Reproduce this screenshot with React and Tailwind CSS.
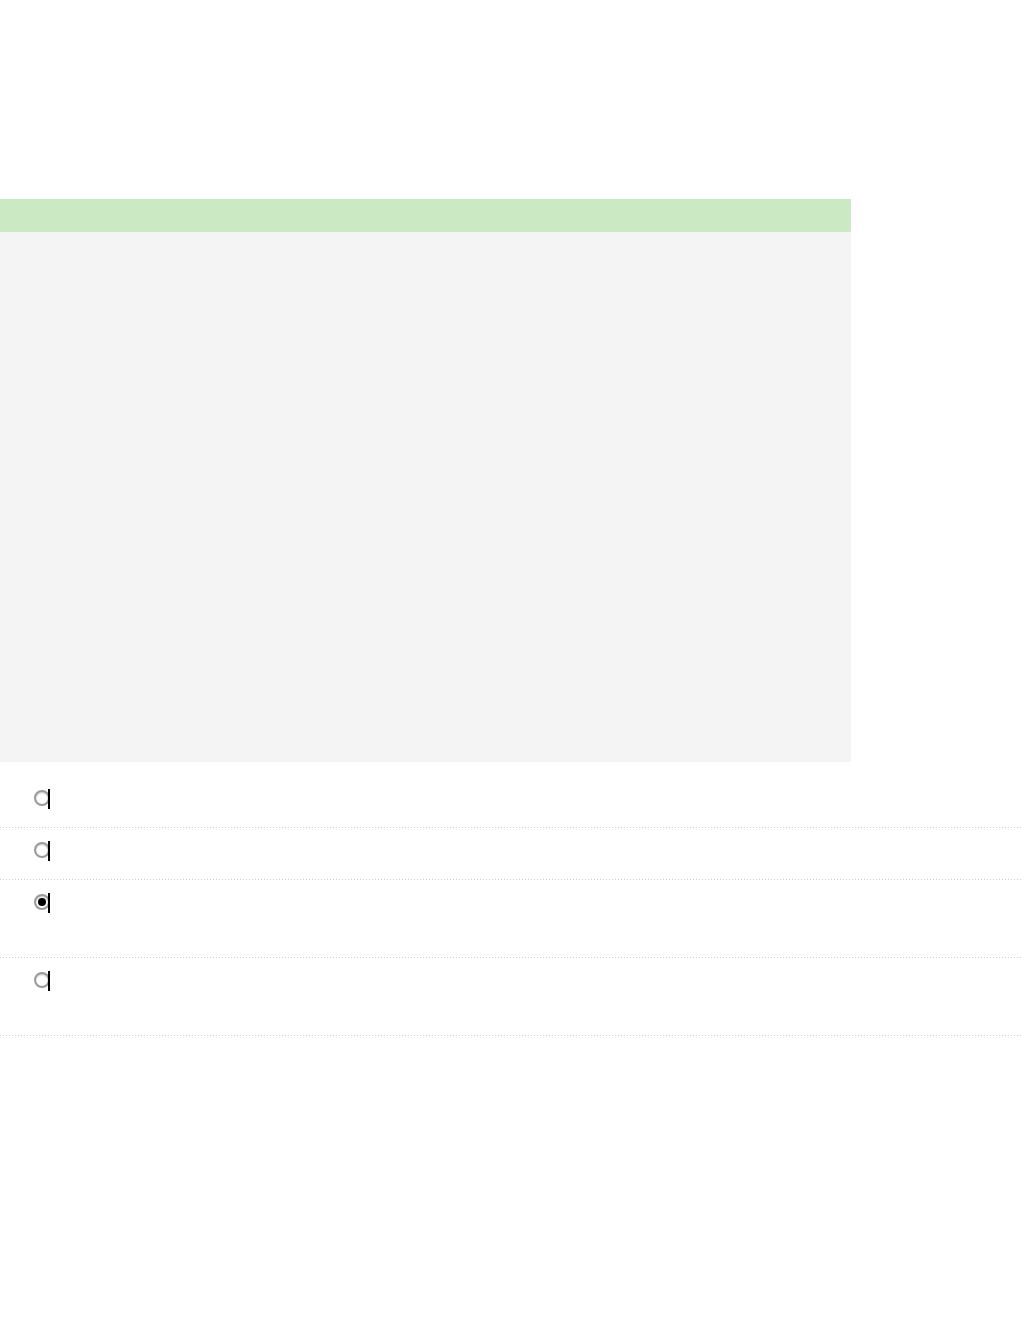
const options = [
  { id: 'a', checked: false, tall: false },
  { id: 'b', checked: false, tall: false },
  { id: 'c', checked: true, tall: true },
  { id: 'd', checked: false, tall: true },
]

const Radio = ({ checked }) => (
  <div className="relative h-4 w-4">
    <div className="flex h-4 w-4 items-center justify-center rounded-full border-2 border-[#9a9a9a] bg-[radial-gradient(circle_at_50%_60%,#ffffff_45%,#e2e2e2_100%)] shadow-[inset_0_1px_1px_rgba(0,0,0,0.15)]">
      {checked && <div className="h-[8px] w-[8px] rounded-full bg-black" />}
    </div>
    {/* caret-like bar sitting on the right edge */}
    <div className="absolute left-[14px] top-[-1px] h-5 w-[2px] bg-black" />
  </div>
)

const Dots = () => (
  <div className="h-px w-full bg-[repeating-linear-gradient(to_right,#cfcfcf_0_1px,transparent_1px_3px)]" />
)

export default function App() {
  return (
    <div className="min-h-[1330px] bg-white font-['Liberation_Sans',sans-serif]">
      <div className="h-[199px]" />
      <div className="w-[851px]">
        <div className="h-[33px] bg-[#cbeac3]" />
        <div className="h-[530px] bg-[#f4f4f4]" />
      </div>
      <ul className="mt-[14px]">
        {options.map((o) => (
          <li key={o.id}>
            <div className={`pl-[34px] pt-[14px] ${o.tall ? 'h-[77px]' : 'h-[51px]'}`}>
              <Radio checked={o.checked} />
            </div>
            <Dots />
          </li>
        ))}
      </ul>
    </div>
  )
}
